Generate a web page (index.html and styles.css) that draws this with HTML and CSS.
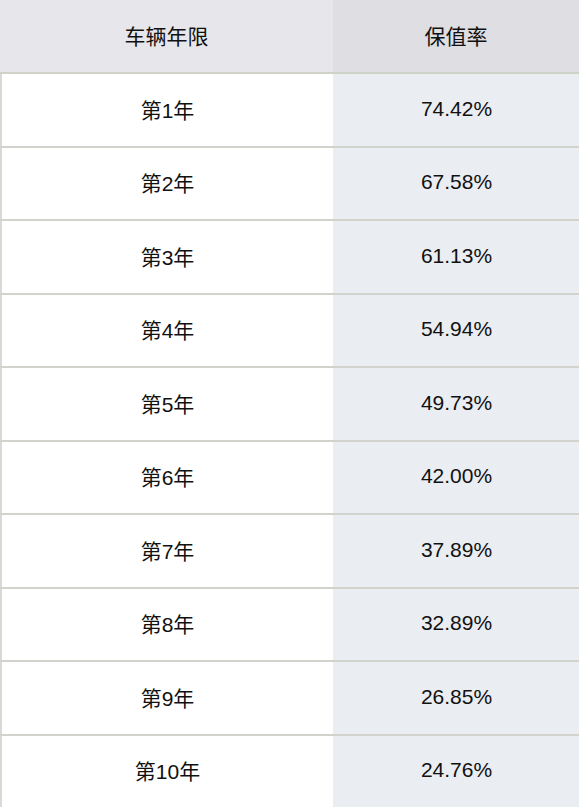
FILE: index.html
```html
<!DOCTYPE html>
<html lang="zh-CN">
<head>
<meta charset="utf-8">
<title>保值率</title>
<link rel="stylesheet" href="styles.css">
</head>
<body>
<div class="table">
  <div class="row head">
    <div class="cell c1">车辆年限</div>
    <div class="cell c2">保值率</div>
  </div>
  <div class="row"><div class="cell c1">第1年</div><div class="cell c2">74.42%</div></div>
  <div class="row"><div class="cell c1">第2年</div><div class="cell c2">67.58%</div></div>
  <div class="row"><div class="cell c1">第3年</div><div class="cell c2">61.13%</div></div>
  <div class="row"><div class="cell c1">第4年</div><div class="cell c2">54.94%</div></div>
  <div class="row"><div class="cell c1">第5年</div><div class="cell c2">49.73%</div></div>
  <div class="row"><div class="cell c1">第6年</div><div class="cell c2">42.00%</div></div>
  <div class="row"><div class="cell c1">第7年</div><div class="cell c2">37.89%</div></div>
  <div class="row"><div class="cell c1">第8年</div><div class="cell c2">32.89%</div></div>
  <div class="row"><div class="cell c1">第9年</div><div class="cell c2">26.85%</div></div>
  <div class="row"><div class="cell c1">第10年</div><div class="cell c2">24.76%</div></div>
</div>
</body>
</html>
```
FILE: styles.css
```css
html, body {
  margin: 0;
  padding: 0;
  background: #ffffff;
}
body {
  font-family: "Liberation Sans", Arial, "Noto Sans CJK SC", sans-serif;
  font-size: 21px;
  color: #111111;
  overflow: hidden;
}
.table {
  display: flex;
  flex-direction: column;
  width: 579px;
}
.row {
  display: grid;
  grid-template-columns: 333px 1fr;
  height: 71.5px;
  border-bottom: 2px solid #d3d3cd;
}
.row.head {
  height: 72px;
  border-bottom-color: #cfd2c6;
}
.cell {
  display: flex;
  align-items: center;
  justify-content: center;
  padding-bottom: 2px;
}
.c1 {
  background: #ffffff;
  border-left: 2px solid #dadad4;
}
.c2 {
  background: #eaedf1;
  border-left: 1px solid #ececf6;
}
.head .c1 {
  background: #e7e7eb;
  border-left: none;
}
.head .c2 {
  background: #dfdee3;
  border-left: none;
}
```
